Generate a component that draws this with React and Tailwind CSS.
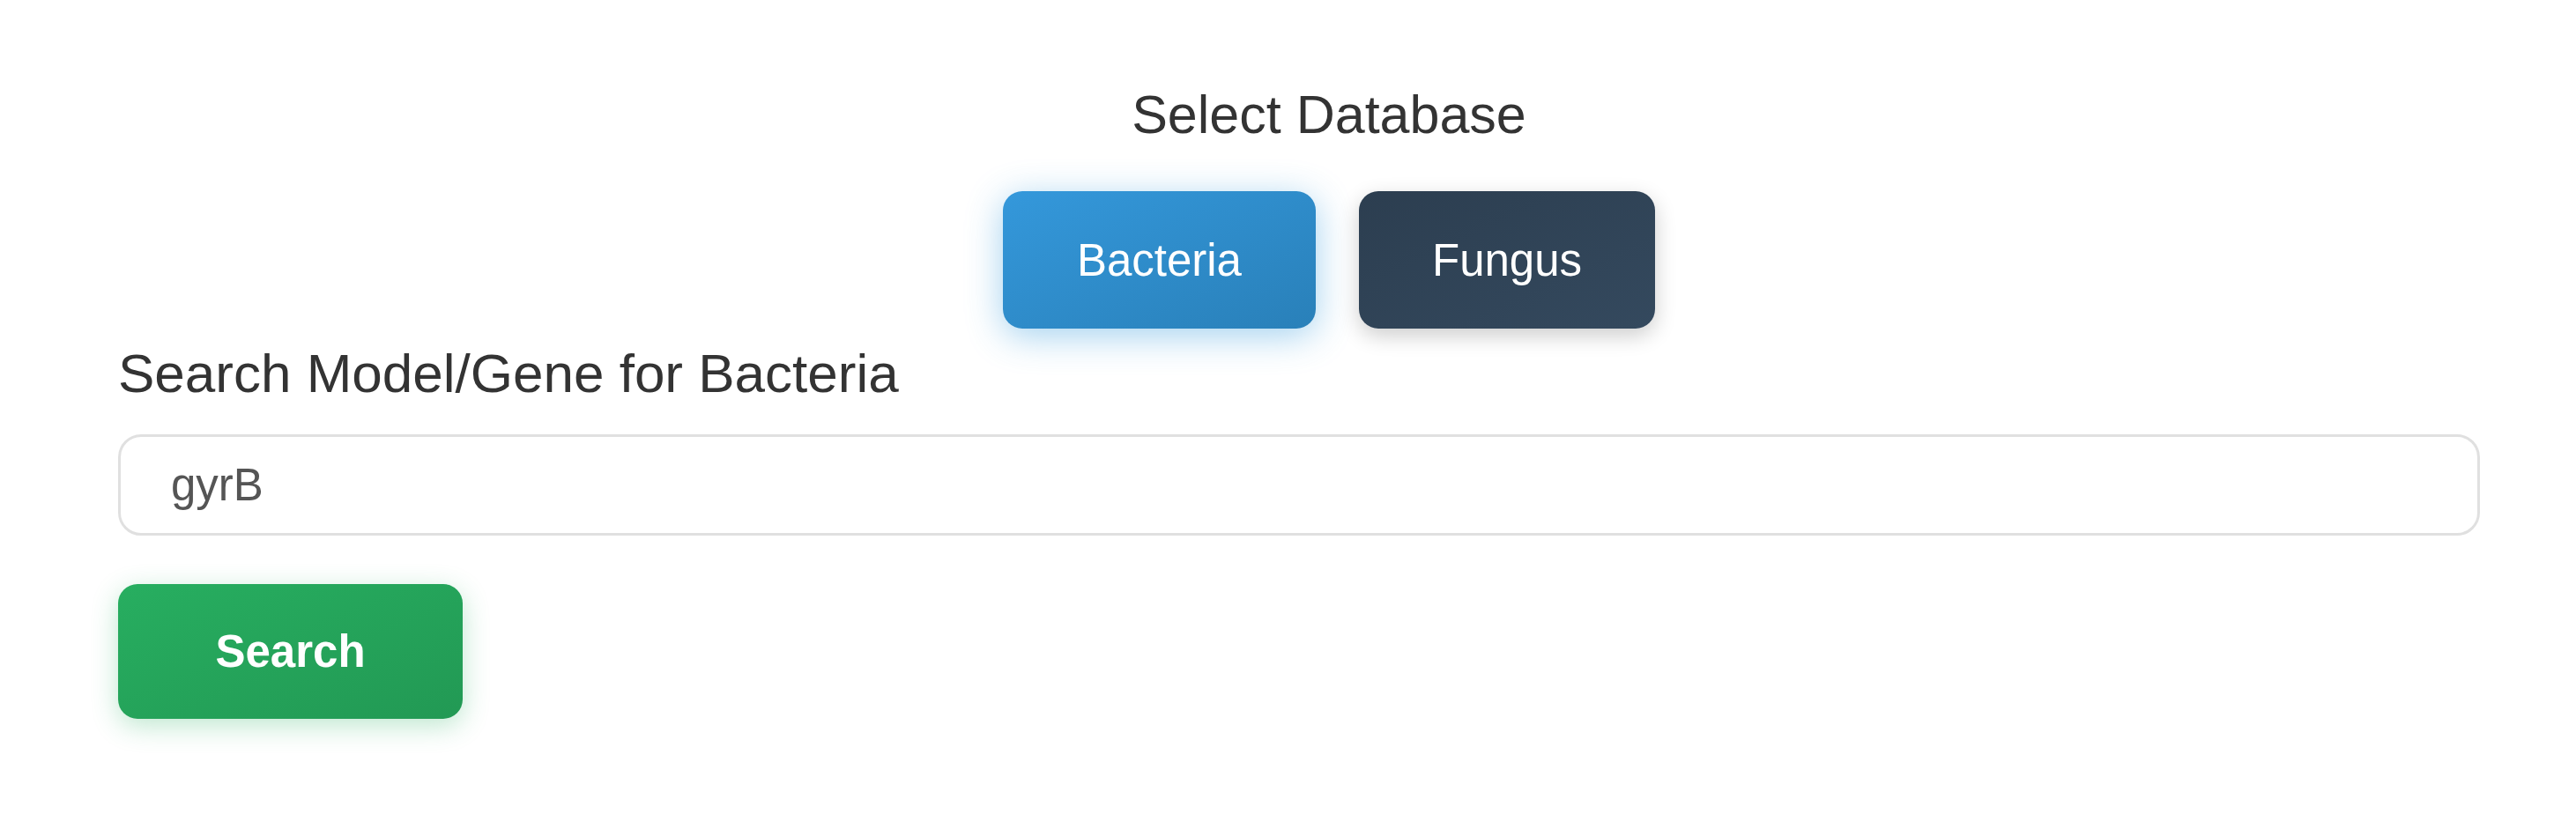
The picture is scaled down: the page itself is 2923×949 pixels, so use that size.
import React from "react";

export default function App() {
  return (
    <div className="min-h-screen bg-white [font-family:'Liberation_Sans',Arial,sans-serif] text-[#333]">
      <div className="flex flex-col pl-[134px] pr-[109px] pt-[95px]">
        <div className="flex flex-col items-center pl-[68px]">
          <h2 className="text-[61px] leading-[70px] font-normal text-[#333]">Select Database</h2>
          <div className="mt-[52px] flex gap-[49px]">
            <button className="h-[156px] px-[84px] rounded-[22px] bg-gradient-to-br from-[#3498db] to-[#2980b9] text-white text-[51px] leading-none shadow-[0_8px_40px_rgba(52,152,219,0.45)]">
              Bacteria
            </button>
            <button className="h-[156px] px-[83px] rounded-[22px] bg-gradient-to-br from-[#2c3e50] to-[#34495e] text-white text-[51px] leading-none shadow-[0_8px_24px_rgba(0,0,0,0.2)]">
              Fungus
            </button>
          </div>
        </div>
        <label className="mt-[16px] text-[62px] leading-[70px] text-[#333]">Search Model/Gene for Bacteria</label>
        <input
          type="text"
          defaultValue="gyrB"
          className="mt-[34px] h-[115px] w-full rounded-[26px] border-[3px] border-[#e0e0e0] bg-white pl-[57px] pr-[40px] text-[51px] text-[#555] outline-none"
        />
        <div className="mt-[55px]">
          <button className="h-[153px] w-[391px] rounded-[22px] bg-gradient-to-br from-[#27ae60] to-[#229954] text-white text-[51px] font-bold leading-none shadow-[0_8px_30px_rgba(39,174,96,0.3)]">
            Search
          </button>
        </div>
      </div>
    </div>
  );
}
